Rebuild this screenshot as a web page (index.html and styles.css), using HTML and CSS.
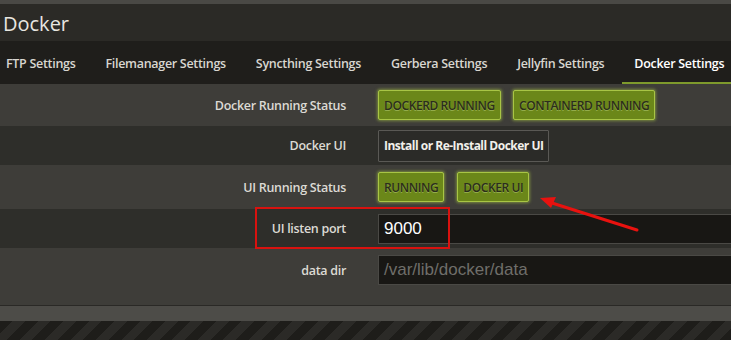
FILE: index.html
```html
<!DOCTYPE html>
<html>
<head>
<meta charset="utf-8">
<link rel="stylesheet" href="styles.css">
</head>
<body>
<div class="page">
  <div class="topstrip"></div>
  <header class="titlebar"><h1>Docker</h1></header>
  <nav class="tabs">
    <span class="tab">FTP Settings</span>
    <span class="tab">Filemanager Settings</span>
    <span class="tab">Syncthing Settings</span>
    <span class="tab">Gerbera Settings</span>
    <span class="tab">Jellyfin Settings</span>
    <span class="tab active">Docker Settings</span>
  </nav>
  <section class="form">
    <div class="row light r1">
      <div class="label">Docker Running Status</div>
      <div class="ctrl">
        <span class="badge">DOCKERD RUNNING</span>
        <span class="badge">CONTAINERD RUNNING</span>
      </div>
    </div>
    <div class="row dark r2">
      <div class="label">Docker UI</div>
      <div class="ctrl"><button class="btn">Install or Re-Install Docker UI</button></div>
    </div>
    <div class="row light r3">
      <div class="label">UI Running Status</div>
      <div class="ctrl">
        <span class="badge">RUNNING</span>
        <span class="badge">DOCKER UI</span>
      </div>
    </div>
    <div class="row dark r4">
      <div class="label">UI listen port</div>
      <div class="ctrl"><div class="input value">9000</div></div>
    </div>
    <div class="row light r5">
      <div class="label">data dir</div>
      <div class="ctrl"><div class="input placeholder">/var/lib/docker/data</div></div>
    </div>
  </section>
  <div class="footer"></div>
  <div class="stripes"></div>
  <div class="highlight"></div>
  <svg class="arrow" width="731" height="340" viewBox="0 0 731 340">
    <line x1="637" y1="230" x2="552" y2="203" stroke="#e8120f" stroke-width="3" stroke-linecap="round"/>
    <polygon points="540,198 556,197 551,208" fill="#e8120f"/>
  </svg>
</div>
</body>
</html>
```
FILE: styles.css
```css
* { box-sizing: border-box; }
html, body { margin: 0; padding: 0; }
body {
  width: 731px;
  height: 340px;
  overflow: hidden;
  background: #1f1e1b;
  font-family: "Open Sans", "DejaVu Sans", sans-serif;
}
.page { position: relative; width: 731px; height: 340px; }
.topstrip { height: 4px; background: #4a4945; }
.titlebar {
  height: 37px;
  background: #2b2a26;
  display: flex;
  align-items: center;
  padding-left: 3px;
}
.titlebar h1 {
  margin: 0;
  font-size: 20px;
  font-weight: 500;
  color: #e8e6e0;
  line-height: 1;
  position: relative;
  top: 1px;
}
.tabs {
  height: 43px;
  background: #1f1e1b;
  display: flex;
  align-items: stretch;
  padding-left: 6px;
  gap: 30px;
}
.tab {
  display: flex;
  align-items: center;
  font-size: 12.5px;
  font-weight: 600;
  color: #d8d6d0;
  letter-spacing: -0.3px;
  padding-top: 1px;
  position: relative;
  white-space: nowrap;
}
.tab.active { color: #ffffff; }
.tab.active::after {
  content: "";
  position: absolute;
  left: -12px;
  right: -20px;
  bottom: 0;
  height: 2px;
  background: #7e9a2c;
}
.form { display: flex; flex-direction: column; }
.row {
  display: grid;
  grid-template-columns: 346px 1fr;
  column-gap: 32px;
  align-items: center;
}
.row.light { background: #3e3d39; }
.row.dark { background: #2e2e2a; }
.r1 { height: 42px; }
.r2 { height: 39px; }
.r3 { height: 44px; }
.r4 { height: 39px; }
.r5 { height: 57px; align-items: start; padding-top: 7px; }
.r5 .label { padding-top: 7px; }
.label {
  text-align: right;
  font-size: 12.5px;
  font-weight: 600;
  color: #dcdad4;
  letter-spacing: -0.3px;
}
.ctrl { display: flex; gap: 12px; align-items: center; }
.r3 .ctrl { gap: 13px; }
.badge {
  display: inline-flex;
  align-items: center;
  height: 30px;
  padding: 0 5px;
  background: #6b8719;
  border: 1px solid #a8c545;
  border-radius: 2px;
  box-shadow: 0 0 3px 1px rgba(170, 200, 70, 0.55);
  font-size: 12px;
  font-weight: 600;
  color: #2b2d1c;
  letter-spacing: -0.4px;
  text-shadow: 0 1px 0 rgba(200, 220, 140, 0.45);
}
.btn {
  height: 32px;
  padding: 0 5px;
  background: #2b2b28;
  border: 1px solid #5a5955;
  border-radius: 1px;
  font-family: inherit;
  font-size: 12px;
  font-weight: 700;
  color: #f2f0ea;
  letter-spacing: -0.5px;
}
.input {
  flex: 1;
  height: 30px;
  background: #181714;
  border: 1px solid #4a4945;
  border-right: none;
  display: flex;
  align-items: center;
  padding-left: 5px;
  font-family: "Liberation Sans", Arial, sans-serif;
  font-size: 17px;
}
.value { color: #ffffff; }
.placeholder { color: #6f6e6a; }
.footer {
  height: 16px;
  background: #4d4c48;
  border-top: 1px solid #2a2926;
}
.stripes {
  height: 20px;
  background: repeating-linear-gradient(135deg, #1e1d1a 0, #1e1d1a 9px, #2b2a27 9px, #2b2a27 18px);
}
.highlight {
  position: absolute;
  left: 255px;
  top: 207px;
  width: 195px;
  height: 42px;
  border: 2px solid #d8120f;
}
.arrow { position: absolute; left: 0; top: 0; pointer-events: none; }
```
